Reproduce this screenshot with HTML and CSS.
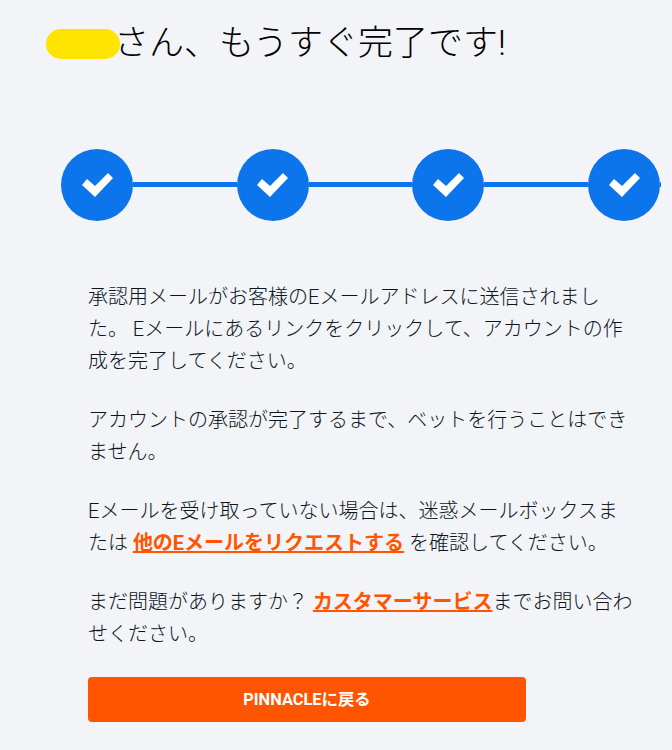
FILE: index.html
```html
<!DOCTYPE html>
<html lang="ja">
<head>
<meta charset="utf-8">
<title>もうすぐ完了です</title>
<link rel="stylesheet" href="styles.css">
</head>
<body>
<main class="page">
  <h1 class="title"><span class="pill"></span>さん、もうすぐ完了です!</h1>
  <div class="steps">
    <div class="step"><svg class="check" viewBox="0 0 31 24"><path d="M0 12 L5 6 L13 13 L26 0 L31 5 L13 24 Z" /></svg></div>
    <div class="bar"></div>
    <div class="step"><svg class="check" viewBox="0 0 31 24"><path d="M0 12 L5 6 L13 13 L26 0 L31 5 L13 24 Z" /></svg></div>
    <div class="bar"></div>
    <div class="step"><svg class="check" viewBox="0 0 31 24"><path d="M0 12 L5 6 L13 13 L26 0 L31 5 L13 24 Z" /></svg></div>
    <div class="bar"></div>
    <div class="step"><svg class="check" viewBox="0 0 31 24"><path d="M0 12 L5 6 L13 13 L26 0 L31 5 L13 24 Z" /></svg></div>
    <div class="bar bar-end"></div>
  </div>
  <div class="body">
    <p>承認用メールがお客様のEメールアドレスに送信されました。 Eメールにあるリンクをクリックして、アカウントの作成を完了してください。</p>
    <p>アカウントの承認が完了するまで、ベットを行うことはできません。</p>
    <p>Eメールを受け取っていない場合は、迷惑メールボックスまたは <a href="#">他のEメールをリクエストする</a> を確認してください。</p>
    <p>まだ問題がありますか？ <a href="#">カスタマーサービス</a>までお問い合わせください。</p>
    <a class="button" href="#">PINNACLEに戻る</a>
  </div>
</main>
</body>
</html>
```
FILE: styles.css
```css
* { box-sizing: border-box; }
html, body { margin: 0; padding: 0; }
body {
  background: #f2f4f8;
  color: #0c141c;
  font-family: Roboto, "Noto Sans CJK JP", sans-serif;
  font-weight: 300;
  height: 750px;
  overflow: hidden;
}
.page { padding: 20px 0 0 46px; }
.title {
  margin: 0;
  display: flex;
  align-items: center;
  font-size: 35px;
  font-weight: 300;
  line-height: 48px;
  color: #000;
}
.pill {
  width: 74px;
  height: 30px;
  margin-right: -6px;
  border-radius: 15px;
  background: #ffe400;
  flex: none;
  position: relative;
  z-index: 1;
}
.steps {
  display: flex;
  align-items: center;
  width: 600px;
  margin: 81px 0 0 15px;
}
.step {
  width: 72px;
  height: 72px;
  flex: none;
  border-radius: 50%;
  background: #0d75eb;
  display: flex;
  align-items: center;
  justify-content: center;
}
.bar {
  flex: 1;
  height: 5px;
  margin-bottom: 1px;
  background: #0d75eb;
}
.bar-end {
  flex: 0 0 1px;
}
.check {
  width: 31px;
  height: 24px;
  fill: #fff;
}
.body {
  width: 546px;
  margin: 60px 0 0 42px;
  font-size: 20px;
  line-height: 32px;
}
.body p { margin: 0 0 27px; }
.body p a {
  color: #ff5500;
  font-weight: 700;
  text-decoration: underline;
}
.button {
  display: flex;
  align-items: center;
  justify-content: center;
  width: 438px;
  height: 45px;
  border-radius: 4px;
  background: #ff5500;
  color: #fff;
  font-size: 16.4px;
  font-weight: 700;
  text-decoration: none;
}
```
